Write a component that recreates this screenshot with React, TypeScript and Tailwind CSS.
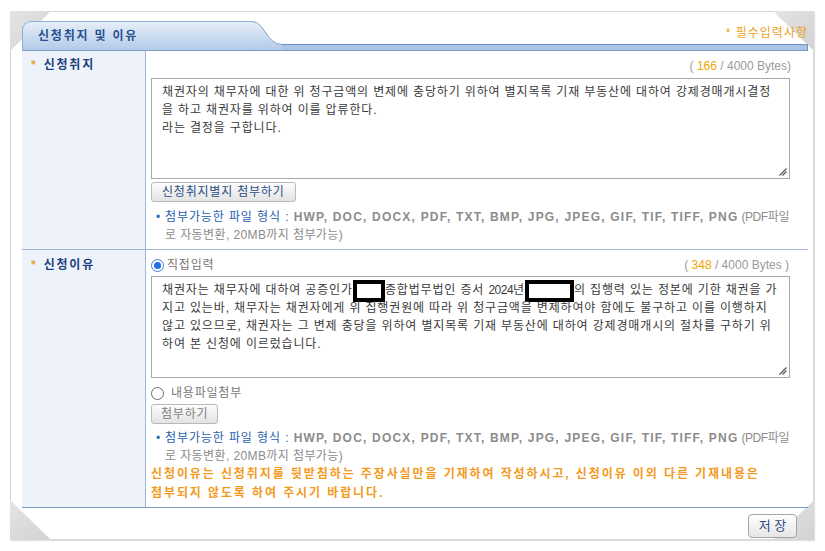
import type { ReactNode } from "react";

const FILE_TYPES = "HWP, DOC, DOCX, PDF, TXT, BMP, JPG, JPEG, GIF, TIF, TIFF, PNG";

function Corner({ className, points }: { className: string; points: string }) {
  return (
    <svg className={className} width="41" height="40" viewBox="0 0 41 40">
      <defs>
        <linearGradient id="fold" x1="0" y1="0" x2="1" y2="1">
          <stop offset="0" stopColor="#e4e4e4" />
          <stop offset="1" stopColor="#d2d2d2" />
        </linearGradient>
      </defs>
      <polygon points={points} fill="url(#fold)" />
    </svg>
  );
}

function Label({ children }: { children: ReactNode }) {
  return (
    <div className="flex items-center pl-[9px] leading-[14px]">
      <span className="mr-[8px] text-[12px] font-bold text-[#eaa23c]">*</span>
      <span className="text-[12px] font-bold tracking-[1.8px] text-[#1d3f7d]">{children}</span>
    </div>
  );
}

function Counter({ value, tail }: { value: string; tail: string }) {
  return (
    <span className="text-[12px] text-[#9a9a9a]">
      ( <span className="text-[#f0a400]">{value}</span> / 4000 Bytes{tail}
    </span>
  );
}

function TextBox({ children }: { children: ReactNode }) {
  return (
    <div className="relative h-full w-[639px] overflow-hidden whitespace-nowrap border border-[#a9a9a9] bg-white pl-[10px] pt-[4px] text-[12px] leading-[18px] tracking-[0.85px] text-[#3a3a3a]">
      {children}
      <svg className="absolute bottom-[2px] right-[2px]" width="9" height="9" viewBox="0 0 9 9">
        <path d="M8.5 1.5 L1.5 8.5 M8.5 4.5 L4.5 8.5" stroke="#555" strokeWidth="1.2" />
      </svg>
    </div>
  );
}

function Redacted({ w }: { w: string }) {
  return <span className={`-my-[3px] inline-block h-[22px] border-[4px] border-black bg-white align-middle ${w}`} />;
}

function FileNote() {
  return (
    <div className="flex text-[12px] leading-[18px]">
      <span className="w-[14px] shrink-0 pl-[5px] text-[#2f6fc0]">•</span>
      <div>
        <div className="whitespace-nowrap">
          <span className="tracking-[0.9px] text-[#1f5fae]">첨부가능한 파일 형식 : </span>
          <span className="font-bold tracking-[1.2px] text-[#8c8c8c]">{FILE_TYPES}</span>
          <span className="tracking-[-0.4px] text-[#8c8c8c]"> (PDF파일</span>
        </div>
        <div className="tracking-[0.4px] text-[#8c8c8c]">로 자동변환, 20MB까지 첨부가능)</div>
      </div>
    </div>
  );
}

function Radio({ checked }: { checked: boolean }) {
  return checked ? (
    <span className="flex h-[13px] w-[13px] items-center justify-center rounded-full border border-[#3c7fd6] bg-white">
      <span className="h-[7px] w-[7px] rounded-full bg-[#1f6fe0]" />
    </span>
  ) : (
    <span className="h-[13px] w-[13px] rounded-full border border-[#6b6b6b] bg-white" />
  );
}

export default function App() {
  return (
    <div className="h-[551px] w-[825px] bg-white pl-[10px] pt-[11px] font-['Liberation_Sans','Noto_Sans_CJK_KR',sans-serif]">
      <div className="relative h-[529px] w-[804px] border border-[#d6d6d6] shadow-[1px_1px_1px_rgba(0,0,0,0.12)]">
        <Corner className="absolute -left-px -top-px" points="0,0 41,0 0,40" />
        <Corner className="absolute -right-px -top-px" points="0,0 41,0 41,40" />
        <Corner className="absolute -bottom-px -left-px" points="0,0 0,40 41,40" />
        <Corner className="absolute -bottom-px -right-px" points="41,0 41,40 0,40" />

        <div className="relative z-10 pl-[11px] pr-[5px] pt-[9px]">
          {/* header tab */}
          <div className="flex h-[29px]">
            <div className="flex w-[230px] items-center rounded-tl-[9px] border-l border-t border-[#8fb0d8] bg-linear-to-b from-[#e6eef8] to-[#b3cbe8] pl-[15px]">
              <span className="text-[12px] font-bold tracking-[1.8px] text-[#26508f]">신청취지 및 이유</span>
            </div>
            <svg width="30" height="29" viewBox="0 0 30 29" className="shrink-0">
              <defs>
                <linearGradient id="tab" x1="0" y1="0" x2="0" y2="1">
                  <stop offset="0" stopColor="#e6eef8" />
                  <stop offset="1" stopColor="#b3cbe8" />
                </linearGradient>
              </defs>
              <path d="M0 0.5 C 13 0.5, 14 23.5, 30 23.5 L30 29 L0 29 Z" fill="url(#tab)" />
              <path d="M0 0.5 C 13 0.5, 14 23.5, 30 23.5" fill="none" stroke="#7fa0c8" />
            </svg>
            <div className="flex flex-1 flex-col">
              <div className="mt-[5px] text-right text-[12px] leading-[14px] tracking-[1px] text-[#f0a020]">* 필수입력사항</div>
              <div className="mt-auto h-[6px] border-r border-t border-[#6f93c4] bg-[#aac4e6]" />
            </div>
          </div>

          {/* table */}
          <div className="grid grid-cols-[124px_1fr] border-b border-t border-[#7a9dc8]">
            <div className="border-b border-r border-[#9db6d9] bg-[#eef3fb] pt-[7px]">
              <Label>신청취지</Label>
            </div>
            <div className="border-b border-[#9db6d9] pb-[5px] pl-[5px] pt-[7px]">
              <div className="pr-[17px] text-right leading-[14px]">
                <Counter value="166" tail=")" />
              </div>
              <div className="mt-[5px] h-[101px]">
                <TextBox>
                  <div>채권자의 채무자에 대한 위 청구금액의 변제에 충당하기 위하여 별지목록 기재 부동산에 대하여 강제경매개시결정</div>
                  <div>을 하고 채권자를 위하여 이를 압류한다.</div>
                  <div>라는 결정을 구합니다.</div>
                </TextBox>
              </div>
              <button className="mt-[3px] h-[20px] rounded-[3px] border border-[#b9b9b9] bg-linear-to-b from-[#fdfdfd] to-[#e3e3e3] px-[10px] text-[12px] leading-none tracking-[0.8px] text-[#2b4d84]">
                신청취지별지 첨부하기
              </button>
              <div className="mt-[5px]">
                <FileNote />
              </div>
            </div>

            <div className="border-r border-[#9db6d9] bg-[#eef3fb] pt-[8px]">
              <Label>신청이유</Label>
            </div>
            <div className="pb-[4px] pl-[5px] pt-[8px]">
              <div className="flex items-center justify-between pr-[19px] leading-[14px]">
                <div className="flex items-center gap-[3px]">
                  <Radio checked />
                  <span className="text-[12px] tracking-[0.8px] text-[#777]">직접입력</span>
                </div>
                <Counter value="348" tail=" )" />
              </div>
              <div className="mt-[4px] h-[102px]">
                <TextBox>
                  <div>
                    채권자는 채무자에 대하여 공증인가<Redacted w="w-[32px]" />종합법무법인 증서 <span className="tracking-[-0.5px]">2024</span>년<Redacted w="w-[49px]" />의 집행력 있는 정본에 기한 채권을 가
                  </div>
                  <div>지고 있는바, 채무자는 채권자에게 위 집행권원에 따라 위 청구금액을 변제하여야 함에도 불구하고 이를 이행하지</div>
                  <div>않고 있으므로, 채권자는 그 변제 충당을 위하여 별지목록 기재 부동산에 대하여 강제경매개시의 절차를 구하기 위</div>
                  <div>하여 본 신청에 이르렀습니다.</div>
                </TextBox>
              </div>
              <div className="mt-[8px] flex items-center gap-[7px] leading-[14px]">
                <Radio checked={false} />
                <span className="text-[12px] tracking-[0.8px] text-[#777]">내용파일첨부</span>
              </div>
              <button className="mt-[4px] h-[20px] rounded-[3px] border border-[#b9b9b9] bg-linear-to-b from-[#fdfdfd] to-[#e3e3e3] px-[9px] text-[12px] leading-none tracking-[0.8px] text-[#808080]">
                첨부하기
              </button>
              <div className="mt-[4px]">
                <FileNote />
              </div>
              <div className="whitespace-nowrap text-[12px] font-bold leading-[19px] tracking-[1.9px] text-[#f39a1e]">
                <div>신청이유는 신청취지를 뒷받침하는 주장사실만을 기재하여 작성하시고, 신청이유 이외 다른 기재내용은</div>
                <div>첨부되지 않도록 하여 주시기 바랍니다.</div>
              </div>
            </div>
          </div>

          <div className="flex justify-end pr-[11px] pt-[6px]">
            <button className="h-[24px] w-[49px] rounded-[4px] border border-[#a6a6a6] bg-linear-to-b from-[#ffffff] to-[#e6e6e6] text-[13px] text-[#2b4d84]">
              저 장
            </button>
          </div>
        </div>
      </div>
    </div>
  );
}
